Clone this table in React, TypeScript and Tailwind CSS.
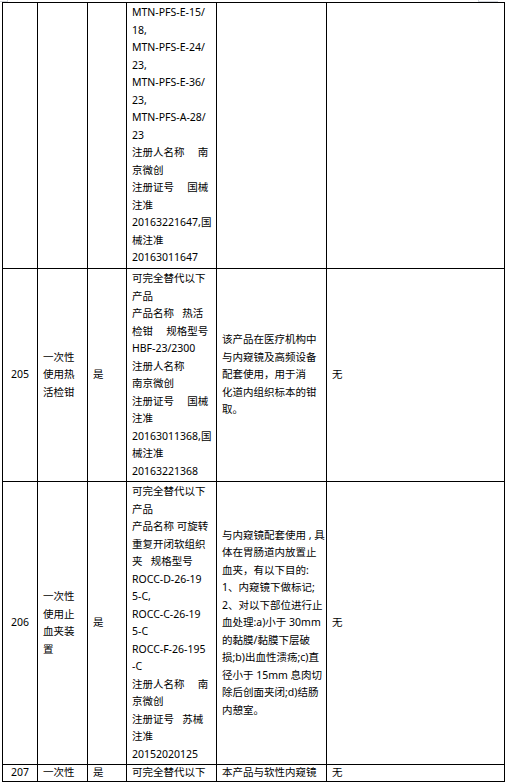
import React from "react";

type Row = {
  no: string;
  name: string[];
  flag: string;
  products: string[];
  usage: string[];
  note: string;
  heightClass: string;
};

const G = "\u3000 ";
const S = "   ";

const rows: Row[] = [
  {
    no: "",
    name: [],
    flag: "",
    products: [
      "MTN-PFS-E-15/",
      "18,",
      "MTN-PFS-E-24/",
      "23,",
      "MTN-PFS-E-36/",
      "23,",
      "MTN-PFS-A-28/",
      "23",
      `注册人名称${G}南`,
      "京微创",
      `注册证号${G}国械`,
      "注准",
      "20163221647,国",
      "械注准",
      "20163011647",
    ],
    usage: [],
    note: "",
    heightClass: "h-[266px]",
  },
  {
    no: "205",
    name: ["一次性", "使用热", "活检钳"],
    flag: "是",
    products: [
      "可完全替代以下",
      "产品",
      `产品名称${S}热活`,
      `检钳${G}规格型号`,
      "HBF-23/2300",
      "注册人名称",
      "南京微创",
      `注册证号${G}国械`,
      "注准",
      "20163011368,国",
      "械注准",
      "20163221368",
    ],
    usage: [
      "该产品在医疗机构中",
      "与内窥镜及高频设备",
      "配套使用，用于消",
      "化道内组织标本的钳",
      "取。",
    ],
    note: "无",
    heightClass: "h-[213px]",
  },
  {
    no: "206",
    name: ["一次性", "使用止", "血夹装", "置"],
    flag: "是",
    products: [
      "可完全替代以下",
      "产品",
      "产品名称 可旋转",
      "重复开闭软组织",
      `夹${S}规格型号`,
      "ROCC-D-26-19",
      "5-C,",
      "ROCC-C-26-19",
      "5-C",
      "ROCC-F-26-195",
      "-C",
      `注册人名称${G}南`,
      "京微创",
      `注册证号${S}苏械`,
      "注准",
      "20152020125",
    ],
    usage: [
      "与内窥镜配套使用 , 具",
      "体在胃肠道内放置止",
      "血夹，有以下目的:",
      "1、内窥镜下做标记;",
      "2、对以下部位进行止",
      "血处理:a)小于 30mm",
      "的黏膜/黏膜下层破",
      "损;b)出血性溃疡;c)直",
      "径小于 15mm 息肉切",
      "除后创面夹闭;d)结肠",
      "内憩室。",
    ],
    note: "无",
    heightClass: "h-[283px]",
  },
  {
    no: "207",
    name: ["一次性"],
    flag: "是",
    products: ["可完全替代以下"],
    usage: ["本产品与软性内窥镜"],
    note: "无",
    heightClass: "h-[17px]",
  },
];

function Lines({ lines }: { lines: string[] }) {
  return (
    <div className="whitespace-pre">
      {lines.map((line, i) => (
        <div key={i}>{line}</div>
      ))}
    </div>
  );
}

const cell =
  "flex items-center overflow-hidden border-r border-b border-black px-[5px]";

export default function App() {
  return (
    <div
      className="w-[508px] h-[783px] bg-white text-black text-[10.5px] leading-[17.5px] overflow-hidden"
      style={{ fontFamily: '"Noto Sans", "Noto Sans CJK SC", sans-serif' }}
    >
      <div className="flex h-[2px]">
        <div className="w-[8px] h-[2px] border-b border-r border-gray-300" />
        <div className="w-[470px]" />
        <div className="w-[20px] h-[2px] border-b border-l border-gray-300" />
      </div>
      <div className="ml-[2px] w-[503px] border-l border-t border-black">
        {rows.map((row, idx) => (
          <div
            key={idx}
            className={`grid grid-cols-[35px_50px_39px_90px_110px_178px] ${row.heightClass}`}
          >
            <div className={`${cell} justify-center`}>{row.no}</div>
            <div className={cell}>
              <Lines lines={row.name} />
            </div>
            <div className={cell}>{row.flag}</div>
            <div className={cell}>
              <Lines lines={row.products} />
            </div>
            <div className={cell}>
              <Lines lines={row.usage} />
            </div>
            <div className={cell}>{row.note}</div>
          </div>
        ))}
      </div>
    </div>
  );
}
